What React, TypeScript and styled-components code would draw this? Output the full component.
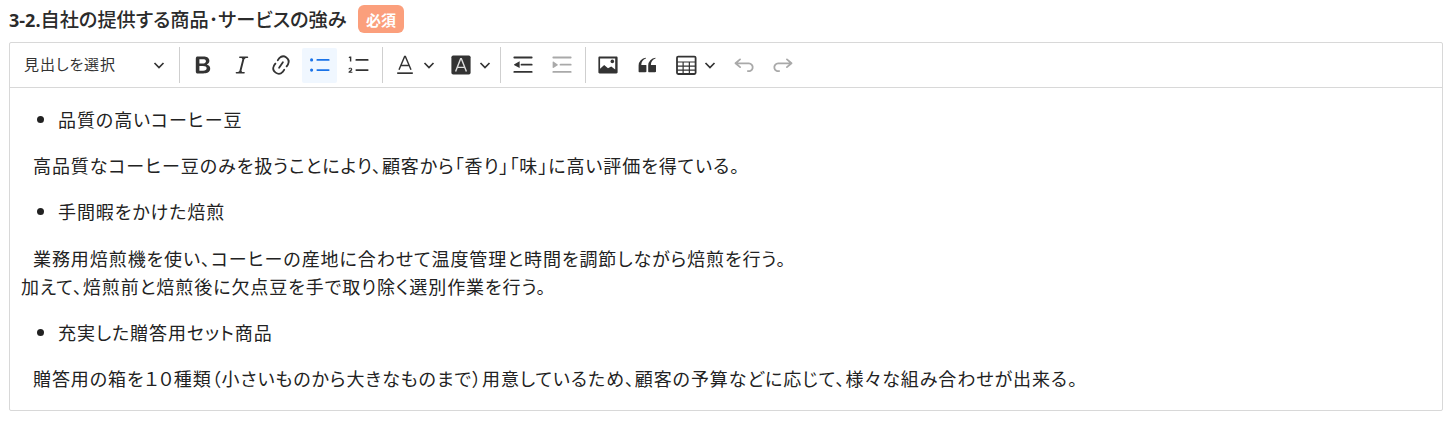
import React from 'react'
import styled, { createGlobalStyle } from 'styled-components'

const Global = createGlobalStyle`
  html, body { margin: 0; background: #fff; }
  body {
    font-family: "Noto Sans CJK JP", "Noto Sans", sans-serif;
    color: #222;
  }
`

const Page = styled.div`
  width: 1455px;
  height: 422px;
  padding: 5px 12px 0 9px;
  box-sizing: border-box;
  overflow: hidden;
`

const TitleRow = styled.div`
  display: flex;
  align-items: center;
  height: 28px;
  margin-bottom: 9px;
`

const Title = styled.h3`
  margin: 0;
  font-size: 19.2px;
  font-weight: 500;
  color: #2b2b2b;
  font-feature-settings: 'palt';
  width: 349px;
  flex: none;
  white-space: nowrap;
  b {
    font-family: 'Open Sans', sans-serif;
    font-weight: 700;
    font-size: 18px;
  }
`

const Badge = styled.span`
  display: flex;
  align-items: center;
  justify-content: center;
  width: 46px;
  height: 28px;
  border-radius: 6px;
  background: #fb9f7c;
  color: #fff;
  font-size: 15px;
  font-weight: 700;
`

const Editor = styled.div`
  border: 1px solid #d8d8d8;
  border-radius: 2px;
`

const Toolbar = styled.div`
  display: flex;
  align-items: center;
  height: 44px;
  border-bottom: 1px solid #d8d8d8;
  padding-left: 14px;
`

const Dropdown = styled.div`
  display: flex;
  align-items: center;
  justify-content: space-between;
  width: 141px;
  padding-right: 4px;
  margin-right: 6px;
  font-size: 15px;
  letter-spacing: 0.9px;
  color: #333;
  font-feature-settings: 'palt';
`

const DropdownLabel = styled.span`
  margin-bottom: 3px;
`

const Separator = styled.span<{ $wide?: boolean }>`
  width: 1px;
  height: 36px;
  background: #cfcfcf;
  flex: none;
  margin: 0 ${(p) => (p.$wide ? 3 : 2)}px 0 4px;
`

const ToolButton = styled.span<{ $on?: boolean; $off?: boolean }>`
  display: flex;
  align-items: center;
  justify-content: center;
  width: 35px;
  height: 35px;
  margin: 0 2px;
  flex: none;
  border-radius: 2px;
  background: ${(p) => (p.$on ? '#f0f7ff' : 'transparent')};
  color: ${(p) => (p.$on ? '#1a73e8' : p.$off ? '#a9a9a9' : '#333')};
`

const Chevron = styled.span<{ $after: number }>`
  display: flex;
  width: 12px;
  margin-left: -1px;
  margin-right: ${(p) => p.$after}px;
  color: #333;
`

const Body = styled.div`
  padding: 17px 11px 8px;
  font-size: 18px;
  line-height: 28px;
  letter-spacing: 0.93px;
  color: #222;
  font-feature-settings: 'palt';
  height: 322px;
  box-sizing: border-box;
`

const List = styled.ul`
  margin: 0 0 18.2px;
  padding-left: 37px;
`

const Para = styled.p`
  margin: 0 0 18.2px;
  text-indent: 12px;
  white-space: pre-line;
`

const Icon: React.FC<{ d: string }> = ({ d }) => (
  <svg width='24' height='24' viewBox='0 0 20 20' fill='currentColor'>
    <path d={d} />
  </svg>
)

const ChevronIcon = () => (
  <svg width='12' height='12' viewBox='0 0 12 12' fill='none' stroke='currentColor' strokeWidth='1.7'>
    <path d='M1.5 4l4.5 4.5L10.5 4' />
  </svg>
)

const BOLD =
  'M10.187 17H5.773c-.637 0-1.092-.138-1.364-.415-.273-.277-.409-.718-.409-1.323V4.738c0-.617.14-1.062.419-1.332.279-.27.73-.406 1.354-.406h4.68c.69 0 1.288.041 1.793.124.506.083.96.242 1.36.478.341.197.644.447.906.75a3.262 3.262 0 0 1 .808 2.162c0 1.401-.722 2.426-2.167 3.075C15.05 10.175 16 11.315 16 13.01a3.756 3.756 0 0 1-2.296 3.504 6.1 6.1 0 0 1-1.517.377c-.571.073-1.238.11-2 .11zm-.217-6.217H7v4.087h3.069c1.977 0 2.965-.69 2.965-2.072 0-.707-.256-1.22-.768-1.537-.512-.319-1.277-.478-2.296-.478zM7 5.13v3.619h2.606c.729 0 1.292-.067 1.69-.2a1.6 1.6 0 0 0 .91-.765c.165-.267.247-.566.247-.897 0-.707-.26-1.176-.778-1.409-.519-.232-1.31-.348-2.375-.348H7z'
const ITALIC =
  'm9.586 14.633.021.004c-.036.335.095.655.393.962.082.083.173.15.274.201h1.474a.6.6 0 1 1 0 1.2H5.304a.6.6 0 0 1 0-1.2h1.15c.474-.07.809-.182 1.005-.334.157-.122.291-.32.404-.597l2.416-9.55a1.053 1.053 0 0 0-.281-.823 1.12 1.12 0 0 0-.442-.296H8.15a.6.6 0 0 1 0-1.2h6.443a.6.6 0 1 1 0 1.2h-1.195c-.376.056-.65.155-.823.296-.215.175-.423.439-.623.79l-2.366 9.347z'
const LINK =
  'm11.077 15 .991-1.416a.75.75 0 1 1 1.229.86l-1.148 1.64a.748.748 0 0 1-.217.206 5.251 5.251 0 0 1-8.503-5.955.741.741 0 0 1 .12-.274l1.147-1.639a.75.75 0 1 1 1.228.86L4.933 10.7l.006.003a3.75 3.75 0 0 0 6.132 4.294l.006.004zm5.494-5.335a.748.748 0 0 1-.12.274l-1.147 1.639a.75.75 0 1 1-1.228-.86l.86-1.23a3.75 3.75 0 0 0-6.144-4.301l-.86 1.229a.75.75 0 0 1-1.229-.86l1.148-1.64a.748.748 0 0 1 .217-.206 5.251 5.251 0 0 1 8.503 5.955zm-4.563-2.532a.75.75 0 0 1 .184 1.045l-3.155 4.505a.75.75 0 1 1-1.229-.86l3.155-4.506a.75.75 0 0 1 1.045-.184z'
const BULLETS =
  'M7 5.750c0 .414.336.75.75.75h9.5a.75.75 0 1 0 0-1.5h-9.5a.75.75 0 0 0-.75.75zM1.700 5.750a1.300 1.300 0 1 0 2.600 0 1.300 1.300 0 1 0-2.600 0zM7 14.250c0 .414.336.75.75.75h9.5a.75.75 0 1 0 0-1.5h-9.5a.75.75 0 0 0-.75.75zM1.700 14.250a1.300 1.300 0 1 0 2.600 0 1.300 1.300 0 1 0-2.600 0z'
const NUMBERS =
  'M7 5.750c0 .414.336.75.75.75h9.5a.75.75 0 1 0 0-1.5h-9.5a.75.75 0 0 0-.75.75zM3.600 3v4H2.400V4.100h-.9v-.8C2.300 3.200 2.600 3 2.800 3h.8zM1.300 16.500v-.8l1.600-1.500c.3-.3.4-.5.4-.7 0-.3-.2-.5-.5-.5s-.5.2-.6.6l-1-.1c.1-.9.7-1.300 1.600-1.300.9 0 1.600.5 1.600 1.300 0 .5-.2.9-.7 1.400l-.9.8h1.700v.8H1.300zM7 14.250c0 .414.336.75.75.75h9.5a.75.75 0 1 0 0-1.5h-9.5a.75.75 0 0 0-.75.75z'
const OUTDENT =
  'M2 3.750c0 .414.336.75.75.75h14.500a.75.75 0 1 0 0-1.500H2.750a.75.75 0 0 0-.75.75zm6 6c0 .414.336.75.75.75h8.500a.75.75 0 1 0 0-1.500h-8.500a.75.75 0 0 0-.75.75zM2.750 16.500h14.500a.75.75 0 1 0 0-1.500H2.750a.75.75 0 1 0 0 1.500zM7.200 6.900 2.800 9.300a.5.5 0 0 0 0 .9l4.400 2.400V6.900z'
const INDENT =
  'M2 3.750c0 .414.336.75.75.75h14.500a.75.75 0 1 0 0-1.500H2.750a.75.75 0 0 0-.75.75zm6 6c0 .414.336.75.75.75h8.500a.75.75 0 1 0 0-1.500h-8.500a.75.75 0 0 0-.75.75zM2.750 16.500h14.500a.75.75 0 1 0 0-1.500H2.750a.75.75 0 1 0 0 1.500zM2.200 7.400v4.700a.4.4 0 0 0 .6.3l3.600-2.200a.4.4 0 0 0 0-.7L2.800 7.100a.4.4 0 0 0-.6.3z'
const QUOTE =
  'M3 10.423a6.5 6.5 0 0 1 6.056-6.408l.038.67C6.448 5.423 5.354 7.663 5.22 10H9c.552 0 .5.432.5.986v4.511c0 .554-.448.503-1 .503h-5c-.552 0-.5-.449-.5-1.003v-4.574zm8 0a6.5 6.5 0 0 1 6.056-6.408l.038.67c-2.646.739-3.74 2.979-3.873 5.315H17c.552 0 .5.432.5.986v4.511c0 .554-.448.503-1 .503h-5c-.552 0-.5-.449-.5-1.003v-4.574z'
const UNDO =
  'm5.042 9.367 2.189 1.837a.75.75 0 0 1-.965 1.149l-3.788-3.18a.747.747 0 0 1-.21-.284.75.75 0 0 1 .17-.945L6.23 4.762a.75.75 0 1 1 .964 1.15L4.863 7.866h8.917A.75.75 0 0 1 14 7.9a4 4 0 1 1-1.477 7.718l.344-1.489a2.5 2.5 0 1 0 1.094-4.73l.008-.032H5.042z'
const REDO =
  'm14.958 9.367-2.189 1.837a.75.75 0 0 0 .965 1.149l3.788-3.18a.747.747 0 0 0 .21-.284.75.75 0 0 0-.17-.945L13.77 4.762a.75.75 0 1 0-.964 1.15l2.331 1.954H6.22A.75.75 0 0 0 6 7.9a4 4 0 1 0 1.477 7.718l-.344-1.489A2.5 2.5 0 1 1 6.039 9.4l-.008-.032h8.927z'

const FontColorIcon = () => (
  <svg width='24' height='24' viewBox='0 0 20 20' fill='none' stroke='currentColor' strokeWidth='1.2'>
    <path d='M5 14 9.7 2.8h.6L15 14M6.6 10.4h6.8' />
    <path d='M3.5 16.8h13' strokeWidth='1.4' />
  </svg>
)

const FontBackgroundIcon = () => (
  <svg width='24' height='24' viewBox='0 0 20 20'>
    <rect x='2' y='2' width='16' height='16' rx='1.5' fill='currentColor' />
    <path d='M5.5 15.5 9.7 4.8h.6l4.2 10.7M7 12h6' fill='none' stroke='#ddd' strokeWidth='1.2' />
  </svg>
)

const ImageIcon = () => (
  <svg width='24' height='24' viewBox='0 0 20 20'>
    <path
      fill='currentColor'
      fillRule='evenodd'
      d='M3 3h14c.6 0 1 .4 1 1v12c0 .6-.4 1-1 1H3c-.6 0-1-.4-1-1V4c0-.6.4-1 1-1zm.4 1.500v8.600l3.400-3.200 3.200 2.800 2.700-1.500 3.300 2.600V4.500H3.400z'
    />
    <circle cx='13.6' cy='7' r='1.5' fill='currentColor' />
  </svg>
)

const TableIcon = () => (
  <svg width='24' height='24' viewBox='0 0 20 20' fill='none' stroke='currentColor'>
    <rect x='2.5' y='3' width='15.5' height='14.5' rx='1' strokeWidth='1.5' />
    <path d='M2.5 7.5h15.5M2.5 11h15.5M2.5 14.3h15.5M7.6 7.5v10M12.8 7.5v10' strokeWidth='1' />
  </svg>
)

const App: React.FC = () => {
  return (
    <Page>
      <Global />
      <TitleRow>
        <Title>
          <b>3-2.</b>自社の提供する商品･サービスの強み
        </Title>
        <Badge>必須</Badge>
      </TitleRow>
      <Editor>
        <Toolbar>
          <Dropdown>
            <DropdownLabel>見出しを選択</DropdownLabel>
            <ChevronIcon />
          </Dropdown>
          <Separator $wide />
          <ToolButton><Icon d={BOLD} /></ToolButton>
          <ToolButton><Icon d={ITALIC} /></ToolButton>
          <ToolButton><Icon d={LINK} /></ToolButton>
          <ToolButton $on><Icon d={BULLETS} /></ToolButton>
          <ToolButton><Icon d={NUMBERS} /></ToolButton>
          <Separator />
          <ToolButton><FontColorIcon /></ToolButton>
          <Chevron $after={6}><ChevronIcon /></Chevron>
          <ToolButton><FontBackgroundIcon /></ToolButton>
          <Chevron $after={5}><ChevronIcon /></Chevron>
          <Separator />
          <ToolButton><Icon d={OUTDENT} /></ToolButton>
          <ToolButton $off><Icon d={INDENT} /></ToolButton>
          <Separator />
          <ToolButton><ImageIcon /></ToolButton>
          <ToolButton><Icon d={QUOTE} /></ToolButton>
          <ToolButton><TableIcon /></ToolButton>
          <Chevron $after={8}><ChevronIcon /></Chevron>
          <ToolButton $off><Icon d={UNDO} /></ToolButton>
          <ToolButton $off><Icon d={REDO} /></ToolButton>
        </Toolbar>
        <Body>
          <List><li>品質の高いコーヒー豆</li></List>
          <Para>高品質なコーヒー豆のみを扱うことにより、顧客から「香り」「味」に高い評価を得ている。</Para>
          <List><li>手間暇をかけた焙煎</li></List>
          <Para>
            {'業務用焙煎機を使い、コーヒーの産地に合わせて温度管理と時間を調節しながら焙煎を行う。\n加えて、焙煎前と焙煎後に欠点豆を手で取り除く選別作業を行う。'}
          </Para>
          <List><li>充実した贈答用セット商品</li></List>
          <Para>贈答用の箱を１０種類（小さいものから大きなものまで）用意しているため、顧客の予算などに応じて、様々な組み合わせが出来る。</Para>
        </Body>
      </Editor>
    </Page>
  )
}

export default App
